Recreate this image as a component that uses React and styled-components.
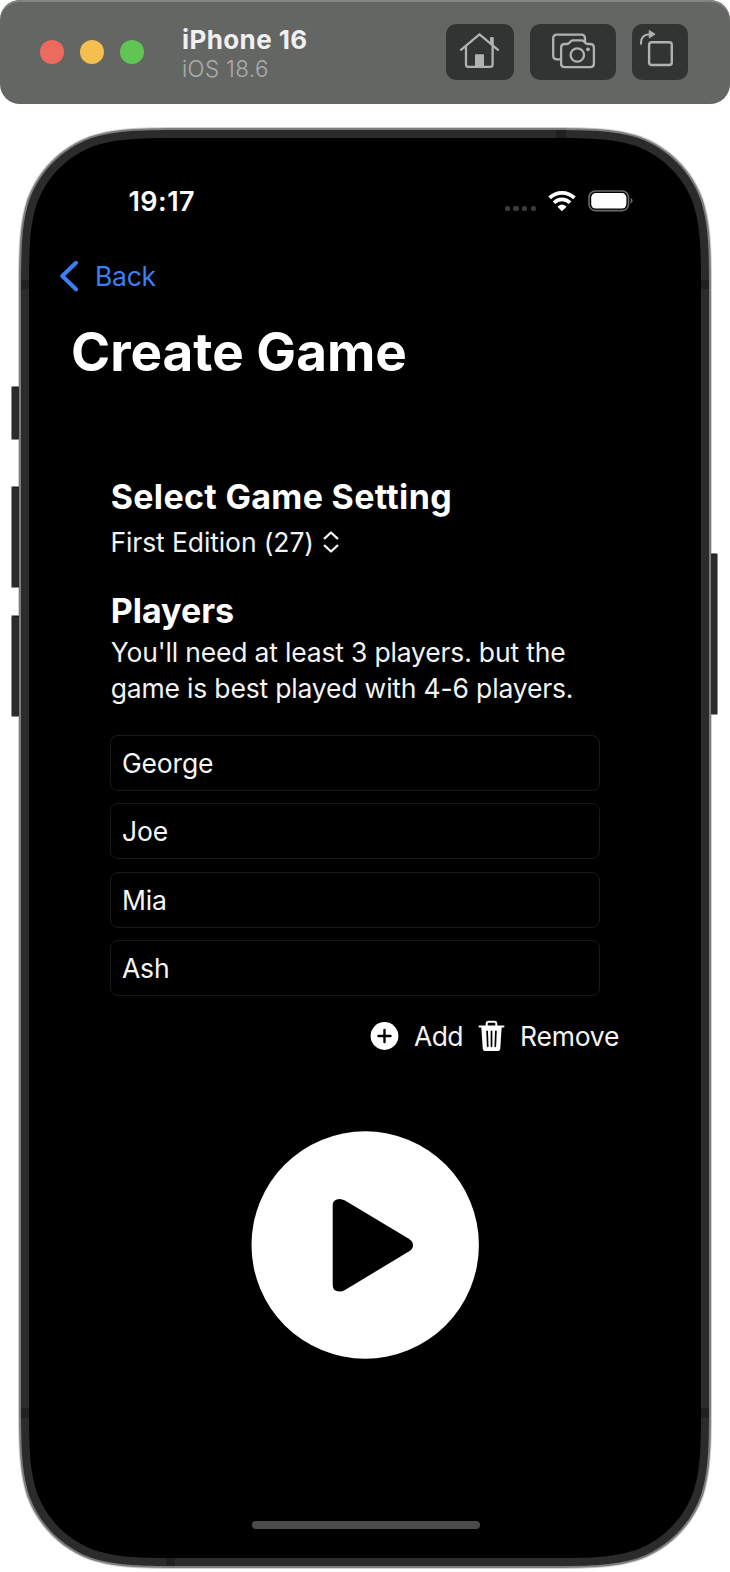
import React from 'react';
import styled, { createGlobalStyle } from 'styled-components';

const GlobalStyle = createGlobalStyle`
  *, *::before, *::after { box-sizing: border-box; }
  html, body { margin: 0; background: #fff; }
  body { font-family: Inter, "Liberation Sans", sans-serif; }
  h1, h2, p { margin: 0; }
  button { font: inherit; border: 0; padding: 0; background: none; color: inherit; }
  svg { display: block; flex: none; }
`;

// Rounded rectangle with continuous (iOS style) corner curvature.
const continuousCorners = (w, h, r) => {
  const a = 1.52866 * r, b = 1.08849 * r, c = 0.86841 * r, d = 0.63149 * r;
  const e = 0.07491 * r, f = 0.37282 * r, g = 0.16906 * r;
  return `path("M${a} 0H${w - a}C${w - b} 0 ${w - c} 0 ${w - d} ${e}C${w - f} ${g} ${w - g} ${f} ${w - e} ${d}C${w} ${c} ${w} ${b} ${w} ${a}V${h - a}C${w} ${h - b} ${w} ${h - c} ${w - e} ${h - d}C${w - g} ${h - f} ${w - f} ${h - g} ${w - d} ${h - e}C${w - c} ${h} ${w - b} ${h} ${w - a} ${h}H${a}C${b} ${h} ${c} ${h} ${d} ${h - e}C${f} ${h - g} ${g} ${h - f} ${e} ${h - d}C0 ${h - c} 0 ${h - b} 0 ${h - a}V${a}C0 ${b} 0 ${c} ${e} ${d}C${g} ${f} ${f} ${g} ${d} ${e}C${c} 0 ${b} 0 ${a} 0Z")`;
};

const Simulator = styled.div`
  width: 730px;
  height: 1572px;
  display: flex;
  flex-direction: column;
  gap: 23px;
  overflow: hidden;
`;

const TitleBar = styled.header`
  flex: none;
  height: 104px;
  display: flex;
  align-items: center;
  padding: 0 42px 0 40px;
  border-radius: 20px;
  background: #646664;
  box-shadow: inset 0 2px 0 #828482;
`;

const TrafficLights = styled.div`
  display: flex;
  gap: 16px;
`;

const Light = styled.span`
  width: 24px;
  height: 24px;
  border-radius: 50%;
  background: ${(p) => p.$color};
`;

const DeviceInfo = styled.div`
  flex: 1;
  margin-left: 38px;
  padding-top: 2px;
  white-space: nowrap;
`;

const DeviceName = styled.div`
  font-size: 26px;
  line-height: 32px;
  font-weight: 700;
  letter-spacing: 0.4px;
  color: #f0f0f0;
`;

const DeviceOS = styled.div`
  font-size: 22.3px;
  line-height: 26px;
  font-weight: 300;
  letter-spacing: 0.4px;
  color: #acaeac;
`;

const ToolButtons = styled.div`
  display: flex;
  gap: 16px;
`;

const ToolButton = styled.button`
  width: ${(p) => p.$width}px;
  height: 56px;
  border-radius: 10px;
  background: #323433;
  color: #b0b2b1;
`;

const Device = styled.div`
  position: relative;
  width: 694px;
  height: 1442px;
  margin-left: 18px;
`;

const SideButton = styled.span`
  position: absolute;
  z-index: 1;
  top: ${(p) => p.$top}px;
  ${(p) => p.$side}: ${(p) => (p.$side === 'left' ? -7 : -6)}px;
  width: ${(p) => (p.$side === 'left' ? 8 : 7)}px;
  height: ${(p) => p.$height}px;
  border: 1px solid #8a8a8a;
  border-${(p) => (p.$side === 'left' ? 'right' : 'left')}: 0;
  border-radius: ${(p) => (p.$side === 'left' ? '2px 0 0 2px' : '0 2px 2px 0')};
  background: #2b2b2b;
  box-shadow: inset 0 1px 0 #1c1c1c;
`;

const Layer = styled.div`
  position: relative;
  width: ${(p) => p.$w}px;
  height: ${(p) => p.$h}px;
  padding: ${(p) => p.$edge}px;
  background: ${(p) => p.$color};
  clip-path: ${(p) => continuousCorners(p.$w, p.$h, p.$r)};
`;

const AntennaBand = styled.span`
  position: absolute;
  ${(p) => p.$at}
  background: #202020;
`;

const Screen = styled.main`
  position: relative;
  display: flex;
  flex-direction: column;
  width: 672px;
  height: 1420px;
  padding-top: 44px;
  background: #000;
  color: #fff;
  clip-path: ${continuousCorners(672, 1420, 104)};
`;

const StatusBar = styled.div`
  display: flex;
  align-items: center;
  height: 37px;
  padding: 0 68px 0 99.500px;
`;

const Clock = styled.span`
  flex: 1;
  padding-top: 2px;
  font-size: 27px;
  line-height: 36px;
  font-weight: 600;
  letter-spacing: 0.45px;
`;

const BackLink = styled.button`
  display: flex;
  align-items: center;
  align-self: flex-start;
  gap: 15px;
  margin: 39px 0 0 30px;
  color: #3880f6;
  font-size: 26.5px;
  line-height: 36px;
  letter-spacing: -0.25px;
`;

const PageTitle = styled.h1`
  margin: 26px 0 0 42px;
  font-size: 53px;
  line-height: 64px;
  font-weight: 700;
  letter-spacing: 0;
`;

const Form = styled.section`
  display: flex;
  flex-direction: column;
  width: 490px;
  margin: 92px 0 0 81px;
  font-size: 26.5px;
  line-height: 36px;
  letter-spacing: -0.18px;
`;

const SectionTitle = styled.h2`
  padding-left: 0.700px;
  font-size: 34px;
  line-height: 42px;
  font-weight: 700;
  letter-spacing: ${(p) => p.$spacing}px;
`;

const Picker = styled.button`
  display: flex;
  align-items: center;
  align-self: flex-start;
  gap: 9px;
  margin: 6px 0 30px;
  padding-left: 0.500px;
  color: #f4f4f4;
  letter-spacing: -0.11px;
`;

const Hint = styled.p`
  margin-top: 2px;
  padding-left: 0.700px;
  color: #f4f4f4;
  white-space: nowrap;
`;

const PlayerList = styled.div`
  display: flex;
  flex-direction: column;
  gap: 12.4px;
  margin-top: 29px;
`;

const PlayerField = styled.div`
  height: 56px;
  padding-left: 11px;
  border: 1px solid #1a1a1a;
  border-radius: 8px;
  line-height: 54px;
  color: #f6f6f6;
`;

const Actions = styled.div`
  display: flex;
  align-items: center;
  gap: 15px;
  height: 36px;
  margin: 22px 0 0 260px;
`;

const Action = styled.button`
  display: flex;
  align-items: center;
  gap: 15px;
  color: #f4f4f4;
  letter-spacing: ${(p) => p.$spacing}px;
`;

const PlayButton = styled.button`
  width: 228px;
  height: 228px;
  margin: 77px 0 0 222px;
`;

const HomeIndicator = styled.div`
  width: 228px;
  height: 8px;
  margin: auto 0 29px 222.700px;
  border-radius: 4px;
  background: #4b4b4b;
`;

const SignalDots = styled.div`
  display: flex;
  gap: 3.5px;
  margin: 16px 12px 0 0;
`;

const SignalDot = styled.span`
  width: 5.2px;
  height: 5.2px;
  border-radius: 2px;
  background: #3a3a3a;
`;

const BatterySlot = styled.span`
  margin-left: 12px;
`;

const HomeIcon = () => (
  <svg width="68" height="56" viewBox="446 24 68 56" fill="none" stroke="currentColor" strokeWidth="2.300" strokeLinecap="round" strokeLinejoin="round">
    <path d="M461 49.8 479.5 34.3 498 49.8" />
    <path d="M466 47v17.5q0 2.4 2.4 2.4h21.8q2.4 0 2.4-2.4V47" />
    <path d="M475 67v-12q0-.8.8-.8h7.400q.8 0 .8.8v12z" fill="currentColor" stroke="none" />
    <path d="M490.100 42.500V38q0-.9.9-.9h1.900q.9 0 .9.900v8.600z" fill="currentColor" stroke="none" />
  </svg>
);

const CameraIcon = () => (
  <svg width="86" height="56" viewBox="530 24 86 56" fill="none" stroke="currentColor" strokeWidth="2.300" strokeLinejoin="round">
    <path d="M560.500 59.300h-3.500q-3.800 0-3.800-3.800v-17q0-3.800 3.800-3.800h24.200q3.800 0 3.800 3.800v4.500" />
    <path d="M564.800 44h2q1.600 0 2.600-1.200l1.200-1.300q1-1.100 2.600-1.100h8.200q1.600 0 2.600 1.100l1.200 1.300q1 1.200 2.600 1.200h2.200q3.900 0 3.900 3.900v15.900q0 3.300-3.300 3.300h-26.200q-3.300 0-3.300-3.300V47.700q0-3.700 3.700-3.700z" />
    <circle cx="577.300" cy="55" r="6.700" />
    <circle cx="588" cy="49.300" r="1.900" fill="currentColor" stroke="none" />
  </svg>
);

const RotateIcon = () => (
  <svg width="56" height="56" viewBox="632 24 56 56" fill="none" stroke="currentColor" strokeWidth="2.400">
    <rect x="649.100" y="42.300" width="22.700" height="22.700" rx="2.600" />
    <path d="M641 44.600v-1.600q0-8.300 8.700-8.700" strokeWidth="2.100" />
    <path d="M649.200 30.500v7.400l5.900-3.700z" fill="currentColor" strokeWidth=".9" strokeLinejoin="round" />
  </svg>
);

const WifiIcon = () => (
  <svg width="28" height="22" viewBox="0 0 28 22" fill="none" stroke="currentColor" strokeWidth="3.700">
    <path d="M1.600 7.900a17.600 17.600 0 0 1 24.800 0" />
    <path d="M6 12.700a11.300 11.300 0 0 1 16 0" strokeWidth="3.600" />
    <path d="M14 21.300 9.900 17.200q-.4-.5.100-.9a6.100 6.100 0 0 1 8 0q.500.400.100.900z" fill="currentColor" stroke="none" />
  </svg>
);

const BatteryIcon = () => (
  <svg width="45" height="22" viewBox="0 0 45 22" fill="none">
    <rect x="1" y="1" width="39.500" height="19.600" rx="6.300" stroke="#6a6a6a" strokeWidth="1.600" />
    <rect x="3.200" y="3.100" width="35.200" height="15.400" rx="4.400" fill="#fff" />
    <path d="M42.600 7.800q2 .8 2 3t-2 3z" fill="#6a6a6a" />
  </svg>
);

const ChevronLeftIcon = () => (
  <svg width="21" height="32" viewBox="0 0 21 32" fill="none" stroke="currentColor" strokeWidth="4" strokeLinecap="round" strokeLinejoin="round">
    <path d="M17 2.800 3.300 16 17 29.300" />
  </svg>
);

const UpDownIcon = () => (
  <svg width="16" height="22" viewBox="0 0 16 22" fill="none" stroke="currentColor" strokeWidth="2.300" strokeLinecap="round" strokeLinejoin="round">
    <path d="M1.700 7.300 8 1.500l6.300 5.800M1.700 14.700 8 20.500l6.300-5.800" />
  </svg>
);

const PlusCircleIcon = () => (
  <svg width="29" height="28" viewBox="0 0 29 28">
    <circle cx="14.500" cy="14" r="13.900" fill="#fff" />
    <path d="M14.500 8v12M8.500 14h12" stroke="#000" strokeWidth="2.400" strokeLinecap="round" />
  </svg>
);

const TrashIcon = () => (
  <svg width="27" height="32" viewBox="0 0 27 32" fill="none">
    <path d="M8.700 6V3.700q0-2 2-2h5.600q2 0 2 2V6" stroke="#fff" strokeWidth="2" />
    <path d="M1.500 6.500h24" stroke="#fff" strokeWidth="2" strokeLinecap="round" />
    <path d="M3.300 6.500h20.400l-1.400 21.700q-.2 2.900-3.100 2.900H7.800q-2.900 0-3.100-2.900z" fill="#fff" />
    <path d="m9.100 11.300.6 15M13.500 11.300v15M17.900 11.300l-.6 15" stroke="#000" strokeWidth="1.700" strokeLinecap="round" />
  </svg>
);

const PlayIcon = () => (
  <svg width="228" height="228" viewBox="0 0 228 228">
    <circle cx="114.200" cy="114" r="113.700" fill="#fff" />
    <path d="M81.700 74.600q0-6.500 7-6.500 2.300 0 5.300 1.500l63.800 38.200q4.200 2.600 4.200 6.400t-4.200 6.400L94 158.900q-3 1.600-5.300 1.600-7 0-7-6.500z" fill="#000" />
  </svg>
);

const players = ['George', 'Joe', 'Mia', 'Ash'];

export default function App() {
  return (
    <Simulator>
      <GlobalStyle />
      <TitleBar>
        <TrafficLights>
          <Light $color="#ed6a5e" />
          <Light $color="#f5bf4f" />
          <Light $color="#61c554" />
        </TrafficLights>
        <DeviceInfo>
          <DeviceName>iPhone 16</DeviceName>
          <DeviceOS>iOS 18.6</DeviceOS>
        </DeviceInfo>
        <ToolButtons>
          <ToolButton $width={68} aria-label="Home"><HomeIcon /></ToolButton>
          <ToolButton $width={86} aria-label="Screenshot"><CameraIcon /></ToolButton>
          <ToolButton $width={56} aria-label="Rotate"><RotateIcon /></ToolButton>
        </ToolButtons>
      </TitleBar>

      <Device>
        <SideButton $side="left" $top={259} $height={54} />
        <SideButton $side="left" $top={359} $height={102} />
        <SideButton $side="left" $top={488} $height={102} />
        <SideButton $side="right" $top={426} $height={162} />
        <Layer $w={694} $h={1442} $r={114} $edge={1} $color="#d2d2d2">
          <Layer $w={692} $h={1440} $r={113} $edge={2} $color="#7c7c7c">
            <Layer $w={688} $h={1436} $r={111} $edge={8} $color="#2b2b2b">
              <AntennaBand $at="top: 0; left: 535px; width: 10px; height: 8px;" />
              <AntennaBand $at="top: 150px; left: 0; width: 8px; height: 9px;" />
              <AntennaBand $at="top: 150px; right: 0; width: 8px; height: 9px;" />
              <AntennaBand $at="top: 1278px; left: 0; width: 8px; height: 10px;" />
              <AntennaBand $at="top: 1278px; right: 0; width: 8px; height: 10px;" />
              <AntennaBand $at="bottom: 0; left: 145px; width: 9px; height: 8px;" />
              <Screen>
                <StatusBar>
                  <Clock>19:17</Clock>
                  <SignalDots>
                    <SignalDot /><SignalDot /><SignalDot /><SignalDot />
                  </SignalDots>
                  <WifiIcon />
                  <BatterySlot><BatteryIcon /></BatterySlot>
                </StatusBar>
                <BackLink><ChevronLeftIcon />Back</BackLink>
                <PageTitle>Create Game</PageTitle>
                <Form>
                  <SectionTitle $spacing={0.32}>Select Game Setting</SectionTitle>
                  <Picker>First Edition (27)<UpDownIcon /></Picker>
                  <SectionTitle $spacing={0}>Players</SectionTitle>
                  <Hint>
                    You'll need at least 3 players. but the<br />
                    game is best played with 4-6 players.
                  </Hint>
                  <PlayerList>
                    {players.map((name) => <PlayerField key={name}>{name}</PlayerField>)}
                  </PlayerList>
                  <Actions>
                    <Action $spacing={-0.6}><PlusCircleIcon />Add</Action>
                    <Action $spacing={-0.2}><TrashIcon />Remove</Action>
                  </Actions>
                </Form>
                <PlayButton aria-label="Start game"><PlayIcon /></PlayButton>
                <HomeIndicator />
              </Screen>
            </Layer>
          </Layer>
        </Layer>
      </Device>
    </Simulator>
  );
}
